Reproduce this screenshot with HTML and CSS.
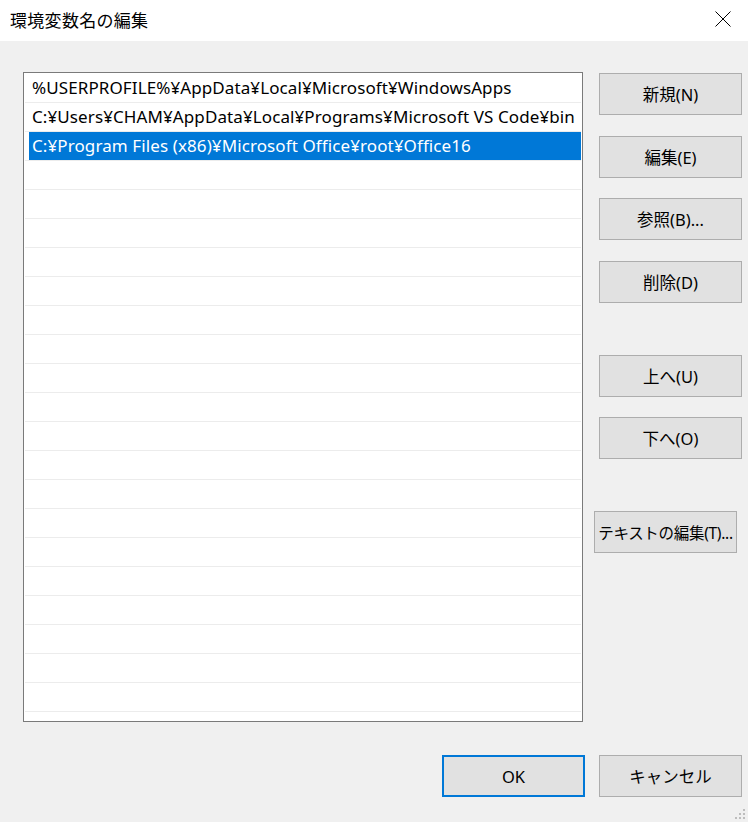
FILE: index.html
```html
<!DOCTYPE html>
<html lang="ja">
<head>
<meta charset="utf-8">
<title>環境変数名の編集</title>
<link rel="stylesheet" href="styles.css">
</head>
<body>
<div class="window">
  <div class="titlebar">
    <span class="title">環境変数名の編集</span>
    <svg class="close" width="16" height="16" viewBox="0 0 16 16"><path d="M0.5 0.5 L15.5 15.5 M15.5 0.5 L0.5 15.5" stroke="#000" stroke-width="1" fill="none"/></svg>
  </div>
  <div class="content">
    <div class="list">
      <div class="row"><span class="cell">%USERPROFILE%¥AppData¥Local¥Microsoft¥WindowsApps</span></div>
      <div class="row"><span class="cell">C:¥Users¥CHAM¥AppData¥Local¥Programs¥Microsoft VS Code¥bin</span></div>
      <div class="row selected"><span class="cell">C:¥Program Files (x86)¥Microsoft Office¥root¥Office16</span></div>
      <div class="row"></div><div class="row"></div><div class="row"></div><div class="row"></div>
      <div class="row"></div><div class="row"></div><div class="row"></div><div class="row"></div>
      <div class="row"></div><div class="row"></div><div class="row"></div><div class="row"></div>
      <div class="row"></div><div class="row"></div><div class="row"></div><div class="row"></div>
      <div class="row"></div><div class="row"></div><div class="row"></div><div class="row"></div>
    </div>
    <div class="side">
      <button class="btn b1">新規(N)</button>
      <button class="btn b2">編集(E)</button>
      <button class="btn b3">参照(B)...</button>
      <button class="btn b4">削除(D)</button>
      <button class="btn b5">上へ(U)</button>
      <button class="btn b6">下へ(O)</button>
      <button class="btn b7">テキストの編集(T)...</button>
    </div>
  </div>
  <div class="footer">
    <button class="btn ok">OK</button>
    <button class="btn">キャンセル</button>
  </div>
  <svg class="grip" width="12" height="12" viewBox="0 0 12 12">
    <rect x="9" y="1" width="2" height="2" fill="#bdbdbd"/>
    <rect x="5" y="5" width="2" height="2" fill="#bdbdbd"/>
    <rect x="9" y="5" width="2" height="2" fill="#bdbdbd"/>
    <rect x="1" y="9" width="2" height="2" fill="#bdbdbd"/>
    <rect x="5" y="9" width="2" height="2" fill="#bdbdbd"/>
    <rect x="9" y="9" width="2" height="2" fill="#bdbdbd"/>
  </svg>
</div>
</body>
</html>
```
FILE: styles.css
```css
html, body {
  margin: 0;
  padding: 0;
  background: #f0f0f0;
}
body {
  font-family: "Noto Sans", "Noto Sans CJK JP", sans-serif;
  color: #000;
}
.window {
  position: relative;
  width: 748px;
  height: 822px;
  background: #f0f0f0;
  overflow: hidden;
}
.titlebar {
  height: 41px;
  background: #fff;
  display: flex;
  align-items: center;
  justify-content: space-between;
  padding: 0 17px 0 10px;
  box-sizing: border-box;
}
.title {
  font-family: "Noto Sans CJK JP", sans-serif;
  font-size: 17px;
  letter-spacing: 0.3px;
  margin-top: -3px;
}
.close {
  display: block;
  margin-top: -4px;
}
.content {
  display: flex;
  padding: 31px 0 0 23px;
  gap: 16px;
}
.list {
  width: 560px;
  height: 650px;
  box-sizing: border-box;
  border: 1px solid #7a7a7a;
  background: #fff;
  padding: 1px;
  overflow: hidden;
}
.row {
  height: 28px;
  border-bottom: 1px solid #ececec;
  display: flex;
}
.cell {
  margin-left: 4px;
  padding-left: 3px;
  flex: 1;
  font-size: 17px;
  line-height: 28px;
  white-space: nowrap;
  letter-spacing: 0.1px;
}
.row.selected .cell {
  background: #0078d7;
  color: #fff;
}
.side {
  display: flex;
  flex-direction: column;
  padding-top: 1px;
}
.btn {
  width: 143px;
  height: 42px;
  box-sizing: border-box;
  background: #e1e1e1;
  border: 1px solid #adadad;
  font-family: "Noto Sans", "Noto Sans CJK JP", sans-serif;
  font-size: 16.5px;
  color: #000;
  padding: 0;
  margin: 0;
  white-space: nowrap;
}
.b2 { margin-top: 21px; }
.b3 { margin-top: 20px; }
.b4 { margin-top: 21px; }
.b5 { margin-top: 52px; }
.b6 { margin-top: 20px; }
.b7 { margin-top: 52px; margin-left: -5px; font-size: 15.5px; letter-spacing: -0.3px; }
.footer {
  display: flex;
  justify-content: flex-end;
  gap: 14px;
  padding: 33px 6px 0 0;
}
.btn.ok {
  border: 2px solid #0078d7;
}
.grip {
  position: absolute;
  right: 2px;
  bottom: 2px;
}
```
